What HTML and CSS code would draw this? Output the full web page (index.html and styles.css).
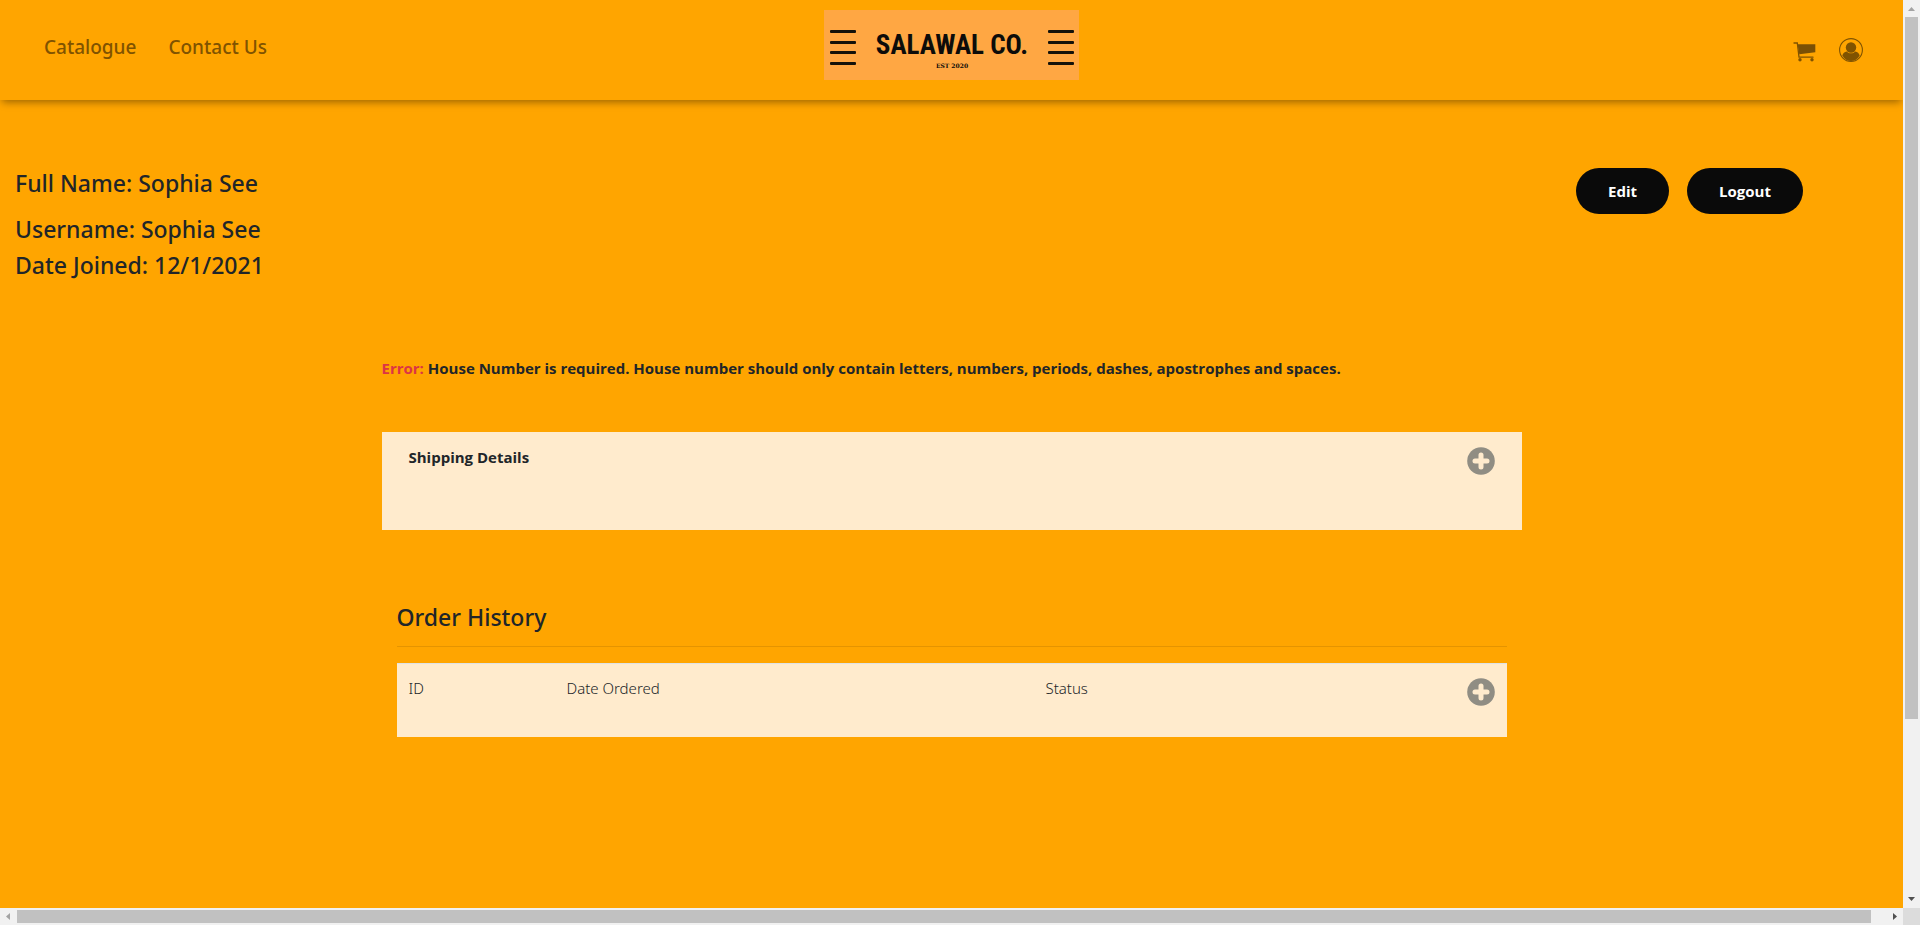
FILE: index.html
```html
<!DOCTYPE html>
<html lang="en">
<head>
<meta charset="utf-8">
<title>Salawal Co. - Profile</title>
<link rel="stylesheet" href="styles.css">
</head>
<body>
<div class="window">
  <div class="page">
    <header class="navbar">
      <nav class="nav-links">
        <a href="#">Catalogue</a>
        <a href="#">Contact Us</a>
      </nav>
      <a class="brand" href="#" aria-label="Salawal Co.">
        <span class="bars"><i></i><i></i><i></i><i></i></span>
        <span class="brand-text"><span class="brand-name">SALAWAL CO.</span><span class="brand-est">EST 2020</span></span>
        <span class="bars"><i></i><i></i><i></i><i></i></span>
      </a>
      <div class="nav-icons">
        <a href="#" aria-label="Cart"><svg class="cart" width="24" height="20" viewBox="0 0 24 20"><path d="M4.500 2.300H22.300V10.300L6.300 12.300Z" fill="#7a5005"/><path d="M1 1H4.300L6 15.200H20" fill="none" stroke="#805300" stroke-width="1.300" stroke-linecap="round"/><circle cx="7" cy="17.800" r="1.700" fill="#805300"/><circle cx="19" cy="17.800" r="1.700" fill="#805300"/></svg></a>
        <a href="#" aria-label="Account"><svg class="user" width="24" height="24" viewBox="0 0 24 24"><circle cx="12" cy="12" r="11.400" fill="none" stroke="#805300" stroke-width="1.100"/><circle cx="12" cy="9.500" r="5.200" fill="#805300"/><path d="M3.300 17.500C4 15 5.500 13.700 7.700 13.400C10 16 14 16 16.300 13.400C18.500 13.700 20 15 20.700 17.500C18.500 21.500 15.500 23 12 23S5.500 21.500 3.300 17.500Z" fill="#805300"/></svg></a>
      </div>
    </header>
    <main>
      <section class="profile">
        <div class="details">
          <h1 class="full-name">Full Name: Sophia See</h1>
          <p>Username: Sophia See</p>
          <p>Date Joined: 12/1/2021</p>
        </div>
        <div class="actions">
          <button type="button">Edit</button>
          <button type="button">Logout</button>
        </div>
      </section>
      <div class="container">
        <p class="error"><span>Error:</span> House Number is required. House number should only contain letters, numbers, periods, dashes, apostrophes and spaces.</p>
        <section class="shipping">
          <h2>Shipping Details</h2>
          <button type="button" class="plus" aria-label="Show shipping details"><svg width="28" height="28" viewBox="0 0 28 28"><circle cx="14" cy="14" r="13.800" fill="#908d83"/><path d="M14 8V20M8 14H20" stroke="#ffebcd" stroke-width="5" stroke-linecap="round"/></svg></button>
        </section>
        <section class="orders">
          <h2>Order History</h2>
          <hr>
          <table>
            <tr>
              <th class="col-id" scope="col">ID</th>
              <th class="col-date" scope="col">Date Ordered</th>
              <th class="col-status" scope="col">Status</th>
              <td class="col-more"><button type="button" class="plus" aria-label="Show orders"><svg width="28" height="28" viewBox="0 0 28 28"><circle cx="14" cy="14" r="13.800" fill="#908d83"/><path d="M14 8V20M8 14H20" stroke="#ffebcd" stroke-width="5" stroke-linecap="round"/></svg></button></td>
            </tr>
          </table>
        </section>
      </div>
    </main>
  </div>
  <div class="scroll scroll-y">
    <svg width="17" height="17" viewBox="0 0 17 17"><path d="M5 11L8.500 7L12 11Z" fill="#a3a3a3"/></svg>
    <div class="track"><div class="thumb"></div></div>
    <svg width="17" height="17" viewBox="0 0 17 17"><path d="M5 6L8.500 10L12 6Z" fill="#505050"/></svg>
  </div>
  <div class="scroll scroll-x">
    <svg width="17" height="17" viewBox="0 0 17 17"><path d="M10 5L6 8.500L10 12Z" fill="#a3a3a3"/></svg>
    <div class="track"><div class="thumb"></div></div>
    <svg width="17" height="17" viewBox="0 0 17 17"><path d="M7 5L11 8.500L7 12Z" fill="#505050"/></svg>
  </div>
  <div class="corner"></div>
</div>
</body>
</html>
```
FILE: styles.css
```css
* { box-sizing: border-box; }

body {
  margin: 0;
  background: #ffa500;
  color: #212529;
  font-family: "Open Sans", "Noto Sans", sans-serif;
  font-size: 15px;
  line-height: 24px;
}

h1, h2, p { margin: 0; }
a { color: inherit; text-decoration: none; }
svg { display: block; }
button { border: 0; font: inherit; cursor: pointer; }

.window {
  display: grid;
  grid-template-columns: minmax(0, 1fr) 17px;
  grid-template-rows: minmax(0, 1fr) 17px;
  height: 100vh;
}

.page { overflow: hidden; }

.navbar {
  display: grid;
  grid-template-columns: 1fr auto 1fr;
  align-items: start;
  height: 100px;
  padding: 10px 40px 0;
  box-shadow: 0 4px 8px -2px rgba(0, 0, 0, 0.4);
}

.nav-links {
  display: flex;
  gap: 32px;
  padding: 22px 0 0 4px;
  color: #805300;
  font-family: "Noto Sans", "Open Sans", sans-serif;
  font-size: 19px;
  font-weight: 500;
  line-height: 30px;
}

.brand {
  display: flex;
  justify-content: space-between;
  align-items: flex-start;
  width: 255px;
  height: 70px;
  padding: 20px 5px 0 6px;
  background: #ffa743;
  color: #0c0c0a;
}

.bars {
  display: flex;
  flex-direction: column;
  justify-content: space-between;
  width: 26px;
  height: 35px;
}
.bars i { height: 3px; border-radius: 1px; background: #15120a; }

.brand-text { display: flex; flex-direction: column; align-items: center; }
.brand-name {
  font-family: "Roboto Condensed", "Liberation Sans Narrow", Roboto, sans-serif;
  font-size: 27px;
  font-weight: 700;
  line-height: 30px;
}
.brand-est {
  font-family: "DejaVu Serif", serif;
  font-size: 6px;
  font-weight: 700;
  line-height: 12px;
}

.nav-icons {
  display: flex;
  justify-content: flex-end;
  align-items: center;
  gap: 22px;
  padding-top: 28px;
}
.nav-icons .cart { margin-top: 4px; }

.profile {
  display: flex;
  justify-content: space-between;
  padding: 65px 100px 0 15px;
  font-family: "Noto Sans", "Open Sans", sans-serif;
  font-size: 23px;
  font-weight: 500;
  line-height: 36px;
}
.full-name { padding-bottom: 10px; font-size: inherit; font-weight: inherit; }

.actions { display: flex; align-items: flex-start; gap: 18px; padding-top: 3px; }
.actions button {
  height: 46px;
  padding: 0 32px;
  border-radius: 23px;
  background: #0a0a0a;
  color: #fff;
  font-family: "Open Sans", "Noto Sans", sans-serif;
  font-size: 15px;
  font-weight: 700;
  line-height: 24px;
}

.container { max-width: 1140px; margin: 73px auto 0; }

.error { font-weight: 700; }
.error span { color: #dc3545; }

.shipping {
  display: flex;
  justify-content: space-between;
  align-items: flex-start;
  min-height: 98px;
  margin-top: 52px;
  padding: 13px 27px 0;
  background: #ffebcd;
}
.shipping h2 { font-size: 15px; font-weight: 700; line-height: 24px; }

.plus { padding: 2px 0 0; background: none; }

.orders { padding: 69px 15px 0; }
.orders h2 {
  font-family: "Noto Sans", "Open Sans", sans-serif;
  font-size: 23px;
  font-weight: 500;
  line-height: 36px;
}
.orders hr { margin: 11px 0 16px; border: 0; border-top: 1px solid #e59400; }

table {
  width: 100%;
  border-spacing: 0;
  table-layout: fixed;
  background: #ffebcd;
  border-top: 1px solid #dee2e6;
}
th, td { height: 73px; padding: 12px 12px 0; vertical-align: top; text-align: left; }
th { font-family: "Noto Sans", "Open Sans", sans-serif; font-weight: 300; }
.col-id { width: 158px; }
.col-date { width: 479px; }
.col-more { width: 80px; }
.col-more .plus { display: block; margin-left: auto; }

.scroll { display: flex; background: #f1f1f1; }
.scroll-y { flex-direction: column; }
.track { flex: 1; display: flex; }
.scroll-y .track { flex-direction: column; padding: 0 2px; }
.scroll-x .track { padding: 2px 0; }
.thumb { background: #c1c1c1; }
.scroll-y .thumb { height: 80.3%; }
.scroll-x .thumb { width: 99.2%; }
.corner { background: #dcdcdc; }
```
